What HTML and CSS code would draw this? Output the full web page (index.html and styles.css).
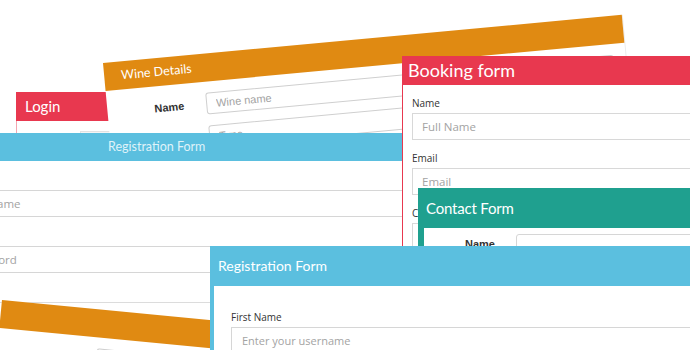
FILE: index.html
```html
<!DOCTYPE html>
<html lang="en">
<head>
    <meta charset="UTF-8">
    <meta name="viewport" content="width=device-width, initial-scale=1.0">
    <title>Form Templates</title>
    <link rel="stylesheet" href="styles.css">
</head>
<body>
    <div class="desk">
        <!-- Login -->
        <section class="card login">
            <header class="card-head">Login</header>
            <div class="card-body">
                <input type="text" class="login-input">
            </div>
        </section>

        <!-- Wine details (top) -->
        <section class="card wine wine-top">
            <header class="card-head">Wine Details</header>
            <div class="card-body">
                <div class="wine-row">
                    <label>Name</label>
                    <input type="text" placeholder="Wine name">
                </div>
                <div class="wine-row">
                    <label>Type</label>
                    <input type="text" placeholder="Type">
                </div>
            </div>
        </section>

        <!-- Registration (back) -->
        <section class="card reg-back">
            <header class="card-head">Registration Form</header>
            <div class="card-body">
                <input type="text" placeholder="Username">
                <input type="password" placeholder="Password">
            </div>
        </section>

        <!-- Wine details (bottom) -->
        <section class="card wine wine-bottom">
            <header class="card-head"></header>
            <div class="card-body">
                <div class="wine-row">
                    <span class="wine-gap"></span>
                    <input type="text">
                </div>
            </div>
        </section>

        <!-- Booking -->
        <section class="card booking">
            <header class="card-head">Booking form</header>
            <div class="card-body">
                <label>Name</label>
                <input type="text" placeholder="Full Name">
                <label>Email</label>
                <input type="email" placeholder="Email">
                <label>Contact</label>
                <input type="text" placeholder="Phone">
            </div>
        </section>

        <!-- Contact -->
        <section class="card contact">
            <header class="card-head">Contact Form</header>
            <div class="card-body">
                <div class="contact-row">
                    <label>Name</label>
                    <input type="text">
                </div>
            </div>
        </section>

        <!-- Registration (front) -->
        <section class="card reg-front">
            <header class="card-head">Registration Form</header>
            <div class="card-body">
                <label>First Name</label>
                <input type="text" placeholder="Enter your username">
            </div>
        </section>
    </div>
</body>
</html>
```

FILE: styles.css
```css
body {
    margin: 0;
    font-family: 'Open Sans', sans-serif;
    background-color: #fff;
}

.desk {
    position: relative;
    width: 690px;
    height: 350px;
    overflow: hidden;
}

.card {
    position: absolute;
    background-color: #fff;
    display: flex;
    flex-direction: column;
}

.card-head {
    font-family: 'Lato', 'Open Sans', sans-serif;
    color: #fff;
    flex-shrink: 0;
}

.card-body {
    flex: 1;
    display: flex;
    flex-direction: column;
    align-items: flex-start;
}

input {
    box-sizing: border-box;
    font-family: 'Open Sans', sans-serif;
    background-color: #fff;
    outline: none;
    margin: 0;
}

input::placeholder {
    color: #a3a3a3;
}

/* Login */
.login {
    left: 16px;
    top: 92px;
    width: 110px;
    height: 80px;
}

.login .card-head {
    height: 29px;
    line-height: 29px;
    padding-left: 9px;
    font-size: 15px;
    background-color: #e8384f;
}

.login .card-body {
    border-left: 1px solid #f3a6b1;
}

.login-input {
    margin: 10px 0 0 63px;
    width: 40px;
    height: 24px;
    border: 1px solid #e2e2e2;
    background-color: #f4f4f4;
}

/* Wine details */
.wine {
    width: 521px;
    height: 150px;
    transform-origin: top left;
    border-right: 1px solid #ececec;
}

.wine-top {
    left: 103px;
    top: 63px;
    transform: rotate(-5.3deg);
}

.wine-bottom {
    left: 2px;
    top: 300px;
    transform: rotate(5.5deg);
}

.wine .card-head {
    height: 28px;
    line-height: 28px;
    padding-left: 17px;
    font-size: 12.5px;
    background-color: #e08a12;
}

.wine .card-body {
    padding-top: 11px;
}

.wine-row {
    display: flex;
    align-items: center;
    width: 100%;
    margin-bottom: 11px;
}

.wine-row label,
.wine-gap {
    width: 99px;
    padding-right: 22px;
    box-sizing: border-box;
    text-align: right;
    font-family: 'Liberation Sans', Arial, sans-serif;
    font-weight: bold;
    font-size: 11px;
    color: #333;
    flex-shrink: 0;
}

.wine-row input {
    flex: 1;
    margin-right: 12px;
    height: 22px;
    padding: 0 9px;
    font-family: 'Liberation Sans', Arial, sans-serif;
    font-size: 11px;
    border: 1px solid #cfcfcf;
    border-radius: 3px;
}

/* Registration, back copy */
.reg-back {
    left: -90px;
    top: 133px;
    width: 520px;
    height: 169px;
    border-bottom: 1px solid #dcdcdc;
}

.reg-back .card-head {
    height: 28px;
    line-height: 28px;
    padding-left: 198px;
    font-size: 12.5px;
    color: rgba(255, 255, 255, 0.82);
    background-color: #5bbfdf;
}

.reg-back .card-body {
    padding-left: 44px;
    align-items: stretch;
}

.reg-back input {
    height: 27px;
    margin-top: 29px;
    padding-left: 10px;
    font-size: 11.5px;
    border: 1px solid #d6d6d6;
}

/* Booking */
.booking {
    left: 402px;
    top: 56px;
    width: 300px;
    height: 200px;
}

.booking .card-head {
    height: 29px;
    line-height: 29px;
    padding-left: 6px;
    font-size: 18px;
    background-color: #e8384f;
}

.booking .card-body {
    border-left: 1px solid #e8384f;
    padding: 11px 0 0 9px;
    align-items: stretch;
}

.booking label {
    font-size: 10px;
    line-height: 14px;
    color: #333;
    margin-bottom: 3px;
}

.booking input {
    height: 27px;
    margin-bottom: 11px;
    padding-left: 9px;
    font-size: 11.5px;
    border: 1px solid #d8d8d8;
}

/* Contact */
.contact {
    left: 418px;
    top: 188px;
    width: 280px;
    height: 80px;
}

.contact .card-head {
    height: 40px;
    line-height: 40px;
    padding-left: 8px;
    font-size: 15px;
    letter-spacing: -0.2px;
    background-color: #1fa08f;
}

.contact .card-body {
    border-left: 6px solid #1fa08f;
}

.contact-row {
    display: flex;
    align-items: flex-start;
    width: 100%;
    margin-top: 6px;
}

.contact-row label {
    width: 92px;
    padding: 4px 21px 0 0;
    box-sizing: border-box;
    text-align: right;
    font-family: 'Liberation Sans', Arial, sans-serif;
    font-weight: bold;
    font-size: 11px;
    color: #333;
    flex-shrink: 0;
}

.contact-row input {
    flex: 1;
    height: 26px;
    border: 1px solid #d6d6d6;
    border-radius: 3px;
}

/* Registration, front copy */
.reg-front {
    left: 210px;
    top: 246px;
    width: 500px;
    height: 120px;
}

.reg-front .card-head {
    height: 40px;
    line-height: 40px;
    padding-left: 8px;
    font-size: 14px;
    background-color: #5bbfdf;
}

.reg-front .card-body {
    border-left: 4px solid #5bbfdf;
    padding: 24px 0 0 17px;
    align-items: stretch;
}

.reg-front label {
    font-size: 10px;
    line-height: 14px;
    color: #333;
    margin-bottom: 3px;
}

.reg-front input {
    height: 27px;
    padding-left: 10px;
    font-size: 11px;
    border: 1px solid #d6d6d6;
}
```
